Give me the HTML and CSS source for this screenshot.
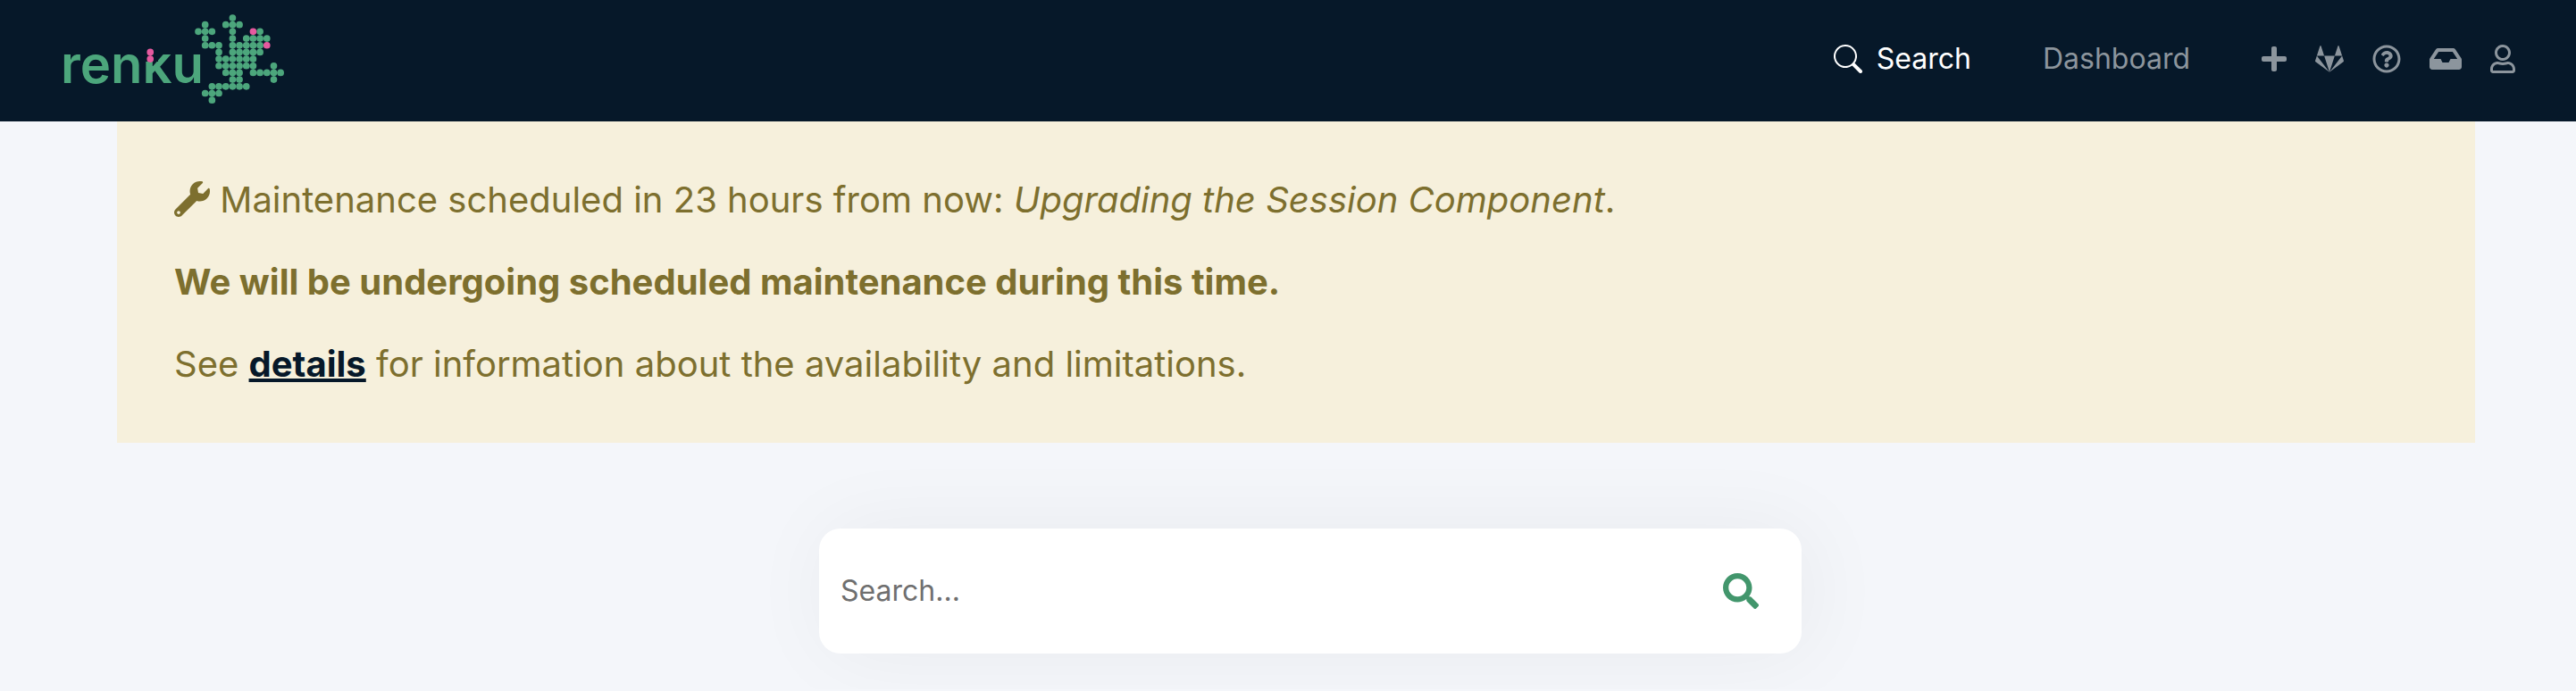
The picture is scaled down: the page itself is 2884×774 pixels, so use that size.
FILE: index.html
```html
<!DOCTYPE html>
<html lang="en">
<head>
<meta charset="utf-8">
<meta name="viewport" content="width=device-width, initial-scale=1">
<title>Renku</title>
<link rel="stylesheet" href="styles.css">
</head>
<body>
<header class="navbar">
  <a class="brand" href="#" aria-label="Renku home">
    <svg class="brand-logo" viewBox="68 14 252 104" aria-hidden="true">
      <text class="brand-word" x="68" y="93">renku</text>
      <rect class="brand-mask" x="161" y="44" width="16" height="25"/>
      <g class="dots" transform="translate(222 20) scale(7.68)">
        <path class="dots-green" d="M5 0h0M1 1h0M4 1h0M5 1h0M6 1h0M0 2h0M1 2h0M2 2h0M5 2h0M9 2h0M1 3h0M5 3h0M7 3h0M8 3h0M9 3h0M10 3h0M1 4h0M2 4h0M3 4h0M5 4h0M6 4h0M7 4h0M8 4h0M9 4h0M3 5h0M5 5h0M6 5h0M7 5h0M8 5h0M9 5h0M3 6h0M4 6h0M5 6h0M6 6h0M7 6h0M8 6h0M3 7h0M4 7h0M5 7h0M6 7h0M7 7h0M8 7h0M11 7h0M4 8h0M5 8h0M6 8h0M8 8h0M9 8h0M10 8h0M11 8h0M12 8h0M5 9h0M6 9h0M11 9h0M2 10h0M3 10h0M4 10h0M5 10h0M6 10h0M7 10h0M1 11h0M2 11h0M3 11h0M2 12h0"/>
        <path class="dots-pink" d="M8 2h0M10 4h0M-7 5h0M-7 6h0"/>
      </g>
    </svg>
  </a>
  <nav class="menu" aria-label="Main">
    <a class="menu-link active" href="#">
      <svg class="icon" viewBox="0 0 16 16" aria-hidden="true"><path d="M11.742 10.344a6.5 6.5 0 1 0-1.397 1.398h-.001c.03.04.062.078.098.115l3.85 3.85a1 1 0 0 0 1.415-1.414l-3.85-3.85a1.007 1.007 0 0 0-.115-.1zM12 6.5a5.5 5.5 0 1 1-11 0 5.5 5.5 0 0 1 11 0z"/></svg>
      <span>Search</span>
    </a>
    <a class="menu-link" href="#">Dashboard</a>
    <div class="tools">
      <button class="tool" type="button" aria-label="Create"><svg class="icon icon-narrow" viewBox="0 0 448 512" aria-hidden="true"><path d="M416 208H272V64c0-17.67-14.33-32-32-32h-32c-17.67 0-32 14.33-32 32v144H32c-17.67 0-32 14.33-32 32v32c0 17.67 14.33 32 32 32h144v144c0 17.67 14.33 32 32 32h32c17.67 0 32-14.33 32-32V304h144c17.67 0 32-14.33 32-32v-32c0-17.67-14.33-32-32-32z"/></svg></button>
      <button class="tool" type="button" aria-label="GitLab"><svg class="icon" viewBox="0 0 512 512" aria-hidden="true"><path d="M105.2 24.9c-3.1-8.9-15.7-8.9-18.9 0L29.8 199.7h132c-.1 0-56.6-174.8-56.6-174.8zM.9 287.7c-2.6 8 .3 16.9 7.1 22l247.9 184-226.2-294zm160.8-88l94.3 294 94.3-294zm349.4 88l-28.8-88-226.3 294 247.9-184c6.9-5.1 9.7-14 7.2-22zM425.7 24.9c-3.1-8.9-15.7-8.9-18.9 0l-56.6 174.8h132z"/></svg></button>
      <button class="tool" type="button" aria-label="Help"><svg class="icon" viewBox="0 0 512 512" aria-hidden="true"><path d="M256 8C119.043 8 8 119.083 8 256c0 136.997 111.043 248 248 248s248-111.003 248-248C504 119.083 392.957 8 256 8zm0 448c-110.532 0-200-89.431-200-200 0-110.495 89.472-200 200-200 110.491 0 200 89.471 200 200 0 110.53-89.431 200-200 200zm107.244-255.2c0 67.052-72.421 68.084-72.421 92.863V300c0 6.627-5.373 12-12 12h-45.647c-6.627 0-12-5.373-12-12v-8.659c0-35.745 27.1-50.034 47.579-61.516 17.561-9.845 28.324-16.541 28.324-29.579 0-17.246-21.999-28.693-39.784-28.693-23.189 0-33.894 10.977-48.942 29.969-4.057 5.12-11.46 6.071-16.666 2.124l-27.824-21.098c-5.107-3.872-6.251-11.066-2.644-16.363C184.846 131.491 214.94 112 261.794 112c49.071 0 101.45 38.304 101.45 88.8zM298 368c0 23.159-18.841 42-42 42s-42-18.841-42-42 18.841-42 42-42 42 18.841 42 42z"/></svg></button>
      <button class="tool" type="button" aria-label="Notifications"><svg class="icon icon-wide" viewBox="0 0 576 512" aria-hidden="true"><path d="M567.938 243.908L462.25 85.374A48.003 48.003 0 0 0 422.311 64H153.689a48 48 0 0 0-39.938 21.374L8.062 243.908A47.994 47.994 0 0 0 0 270.533V400c0 26.51 21.49 48 48 48h480c26.51 0 48-21.49 48-48V270.533a47.994 47.994 0 0 0-8.062-26.625zM162.252 128h251.497l85.333 128H376l-32 64H232l-32-64H76.918l85.334-128z"/></svg></button>
      <button class="tool" type="button" aria-label="Account"><svg class="icon icon-narrow" viewBox="0 0 448 512" aria-hidden="true"><path d="M313.6 304c-28.7 0-42.5 16-89.6 16-47.1 0-60.8-16-89.6-16C60.2 304 0 364.2 0 438.4V464c0 26.5 21.5 48 48 48h352c26.5 0 48-21.5 48-48v-25.6c0-74.2-60.2-134.4-134.4-134.4zM400 464H48v-25.6c0-47.6 38.8-86.4 86.4-86.4 14.6 0 38.3 16 89.6 16 51.7 0 74.9-16 89.6-16 47.6 0 86.4 38.8 86.4 86.4V464zM224 288c79.5 0 144-64.5 144-144S303.5 0 224 0 80 64.5 80 144s64.5 144 144 144zm0-240c52.9 0 96 43.1 96 96s-43.1 96-96 96-96-43.1-96-96 43.1-96 96-96z"/></svg></button>
    </div>
  </nav>
</header>
<main class="page">
  <section class="notice" role="alert">
    <p class="notice-line"><svg class="notice-icon" viewBox="0 0 512 512" aria-hidden="true"><path d="M507.73 109.1c-2.24-9.03-13.54-12.09-20.12-5.51l-74.36 74.36-67.88-11.31-11.31-67.88 74.36-74.36c6.62-6.62 3.43-17.9-5.66-20.16-47.38-11.74-99.55.91-136.58 37.93-39.64 39.64-50.55 97.1-34.05 147.2L18.74 402.76c-24.99 24.99-24.99 65.51 0 90.5 24.99 24.99 65.51 24.99 90.5 0l213.21-213.21c50.12 16.71 107.47 5.68 147.37-34.22 37.07-37.07 49.7-89.32 37.91-136.73zM64 472c-13.25 0-24-10.75-24-24 0-13.26 10.75-24 24-24s24 10.74 24 24c0 13.25-10.75 24-24 24z"/></svg> Maintenance scheduled in 23 hours from now: <em>Upgrading the Session Component</em>.</p>
    <p class="notice-line"><strong>We will be undergoing scheduled maintenance during this time.</strong></p>
    <p class="notice-line">See <a class="notice-link" href="#">details</a> for information about the availability and limitations.</p>
  </section>
  <div class="search-area">
    <form class="search" role="search">
      <input class="search-input" type="text" placeholder="Search..." aria-label="Search">
      <button class="search-button" type="button" aria-label="Run search"><svg class="search-icon" viewBox="0 0 512 512" aria-hidden="true"><path d="M505 442.7L405.3 343c-4.5-4.5-10.6-7-17-7H372c27.6-35.3 44-79.7 44-128C416 93.1 322.9 0 208 0S0 93.1 0 208s93.1 208 208 208c48.3 0 92.7-16.4 128-44v16.3c0 6.4 2.5 12.5 7 17l99.7 99.7c9.4 9.4 24.6 9.4 33.9 0l28.3-28.3c9.4-9.4 9.4-24.6.1-34zM208 336c-70.7 0-128-57.2-128-128 0-70.7 57.2-128 128-128 70.7 0 128 57.2 128 128 0 70.7-57.2 128-128 128z"/></svg></button>
    </form>
  </div>
</main>
</body>
</html>
```
FILE: styles.css
```css
* {
  box-sizing: border-box;
}

:root {
  --navy: #061829;
  --green: #4ca67c;
  --pink: #e6599f;
  --olive: #7d6f2e;
}

body {
  margin: 0;
  background: #f4f6fa;
  font-family: Inter, "Liberation Sans", sans-serif;
  font-size: 32px;
  line-height: 48px;
}

svg {
  fill: currentColor;
}

button {
  padding: 0;
  border: 0;
  background: none;
  color: inherit;
  font: inherit;
  cursor: pointer;
}

.navbar {
  display: flex;
  align-items: center;
  justify-content: space-between;
  padding: 14px 68px 18px;
  background: var(--navy);
  color: #8c959d;
}

.brand,
.brand-logo {
  display: block;
}

.brand-logo {
  width: 252px;
  height: 104px;
  overflow: visible;
}

.brand-word {
  fill: var(--green);
  font-size: 58px;
  font-weight: 600;
}

.brand-mask {
  fill: var(--navy);
}

.dots {
  stroke-width: 1;
  stroke-linecap: round;
}

.dots-green {
  stroke: var(--green);
}

.dots-pink {
  stroke: var(--pink);
}

.menu {
  display: flex;
  align-items: center;
  gap: 80px;
}

.menu-link {
  display: flex;
  align-items: center;
  gap: 16px;
  color: inherit;
  text-decoration: none;
}

.menu-link.active {
  color: #fff;
}

.tools {
  display: flex;
  gap: 32px;
}

.tool {
  display: flex;
}

.icon {
  display: block;
  width: 32px;
  height: 32px;
}

.icon-narrow {
  width: 28px;
}

.icon-wide {
  width: 36px;
}

.page {
  padding: 0 113px 40px 131px;
}

.notice {
  display: grid;
  gap: 32px;
  padding: 58px 64px;
  background: #f6f0dc;
  color: var(--olive);
  font-size: 40px;
  line-height: 60px;
}

.notice-line {
  margin: 0;
}

.notice-icon {
  width: 40px;
  height: 40px;
  vertical-align: -5px;
}

.notice-link {
  color: var(--navy);
  font-weight: 700;
  text-decoration-thickness: 4px;
  text-underline-offset: 2px;
}

.search-area {
  display: flex;
  justify-content: center;
  padding: 96px 0 0 32px;
}

.search {
  display: flex;
  align-items: center;
  width: 1100px;
  max-width: 100%;
  padding: 0 48px 0 24px;
  border-radius: 24px;
  background: #fff;
  box-shadow: 8px 0 96px rgba(0, 0, 0, 0.05);
}

.search-input {
  flex: 1;
  min-width: 0;
  padding: 46px 0;
  border: 0;
  outline: 0;
  background: none;
  color: var(--navy);
  font: inherit;
  line-height: 48px;
}

.search-input::placeholder {
  color: #6f6f6f;
  opacity: 1;
}

.search-button {
  display: flex;
  color: #42966c;
}

.search-icon {
  width: 40px;
  height: 40px;
}
```
